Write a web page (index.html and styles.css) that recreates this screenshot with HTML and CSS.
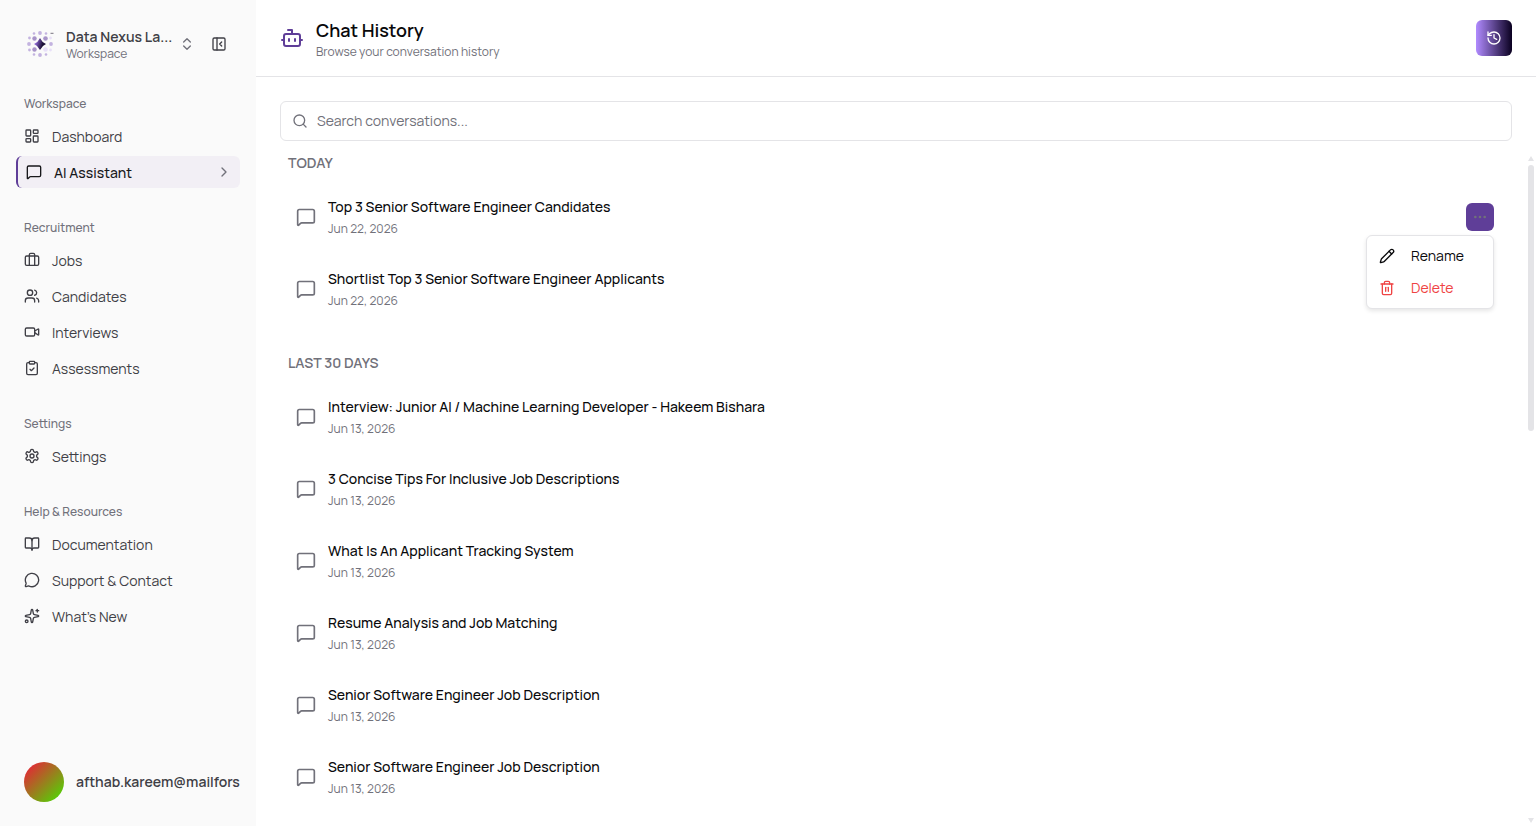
FILE: index.html
```
<!DOCTYPE html>
<html lang="en">
<head>
  <meta charset="UTF-8" />
  <meta name="viewport" content="width=device-width, initial-scale=1" />
  <title>Chat History</title>
  <link rel="stylesheet" href="styles.css">
</head>
<body>

  <!-- Shared icons -->
  <svg class="icon-defs" aria-hidden="true">
    <symbol id="i-message" viewBox="0 0 24 24"><path d="M21 15a2 2 0 0 1-2 2H7l-4 4V5a2 2 0 0 1 2-2h14a2 2 0 0 1 2 2z"/></symbol>
    <symbol id="i-message-wide" viewBox="0 0 24 24"><path d="M22 17a2 2 0 0 1-2 2H6.800a2 2 0 0 0-1.400.600l-2.200 2.200A.7.7 0 0 1 2 21.300V5a2 2 0 0 1 2-2h16a2 2 0 0 1 2 2z"/></symbol>
  </svg>

  <div class="app">

    <!-- Sidebar -->
    <aside class="sidebar">
      <div class="sidebar-top">
        <button class="workspace" type="button">
          <svg class="logo" viewBox="0 0 32 32" aria-hidden="true">
            <defs>
              <linearGradient id="star" x1="0" y1="0" x2="1" y2="0.3">
                <stop offset="0.1" stop-color="#a67cf5"/>
                <stop offset="0.8" stop-color="#1b1036"/>
              </linearGradient>
            </defs>
            <g fill="#c3b3e0">
              <circle cx="16" cy="5" r="1.9"/><circle cx="16" cy="27" r="1.9"/>
              <circle cx="5" cy="16" r="1.9"/><circle cx="27" cy="16" r="1.9"/>
              <circle cx="10" cy="5.5" r="1.3"/><circle cx="22" cy="5.5" r="1.3"/>
              <circle cx="5.5" cy="10" r="1.4"/><circle cx="5.5" cy="22" r="1.4"/>
              <circle cx="10" cy="26.5" r="1.3"/><circle cx="22" cy="26.5" r="1.3"/>
            </g>
            <g fill="#e8e0f8">
              <circle cx="26.5" cy="10" r="1.4"/><circle cx="26.5" cy="22" r="1.4"/>
              <circle cx="21.5" cy="21.5" r="2.3"/>
            </g>
            <g fill="#a894c9">
              <circle cx="10.5" cy="10.5" r="2.2"/><circle cx="21.5" cy="10.5" r="2.3"/>
              <circle cx="10.5" cy="21.5" r="2.2"/>
            </g>
            <path fill="#77727f" d="M26.5 4.8h3v1h-3z"/>
            <path fill="url(#star)" d="M16 10q1.8 4.2 6 6q-4.2 1.8-6 6q-1.8-4.2-6-6q4.2-1.8 6-6z"/>
          </svg>
          <span class="workspace-text">
            <span class="workspace-name">Data Nexus La...</span>
            <span class="workspace-sub">Workspace</span>
          </span>
          <svg class="icon icon-muted" viewBox="0 0 24 24"><path d="m7 15 5 5 5-5"/><path d="m7 9 5-5 5 5"/></svg>
        </button>
        <button class="collapse" type="button" aria-label="Collapse sidebar">
          <svg class="icon" viewBox="0 0 24 24"><rect width="18" height="18" x="3" y="3" rx="2"/><path d="M9 3v18"/><path d="m16 15-3-3 3-3"/></svg>
        </button>
      </div>

      <nav class="nav">
        <section class="nav-group">
          <h2>Workspace</h2>
          <a href="#">
            <svg class="icon" viewBox="0 0 24 24"><rect width="7" height="9" x="3" y="3" rx="1"/><rect width="7" height="5" x="14" y="3" rx="1"/><rect width="7" height="9" x="14" y="12" rx="1"/><rect width="7" height="5" x="3" y="16" rx="1"/></svg>
            <span>Dashboard</span>
          </a>
          <a href="#" class="active" aria-current="page">
            <svg class="icon"><use href="#i-message-wide"/></svg>
            <span>AI Assistant</span>
            <svg class="icon icon-muted chevron" viewBox="0 0 24 24"><path d="m9 18 6-6-6-6"/></svg>
          </a>
        </section>

        <section class="nav-group">
          <h2>Recruitment</h2>
          <a href="#">
            <svg class="icon" viewBox="0 0 24 24"><path d="M16 20V4a2 2 0 0 0-2-2h-4a2 2 0 0 0-2 2v16"/><rect width="20" height="14" x="2" y="6" rx="2"/></svg>
            <span>Jobs</span>
          </a>
          <a href="#">
            <svg class="icon" viewBox="0 0 24 24"><path d="M16 21v-2a4 4 0 0 0-4-4H6a4 4 0 0 0-4 4v2"/><circle cx="9" cy="7" r="4"/><path d="M22 21v-2a4 4 0 0 0-3-3.87"/><path d="M16 3.13a4 4 0 0 1 0 7.75"/></svg>
            <span>Candidates</span>
          </a>
          <a href="#">
            <svg class="icon" viewBox="0 0 24 24"><path d="m16 13 5.223 3.482a.5.5 0 0 0 .777-.416V7.87a.5.5 0 0 0-.752-.432L16 10.5"/><rect x="2" y="6" width="14" height="12" rx="2"/></svg>
            <span>Interviews</span>
          </a>
          <a href="#">
            <svg class="icon" viewBox="0 0 24 24"><rect width="8" height="4" x="8" y="2" rx="1"/><path d="M16 4h2a2 2 0 0 1 2 2v14a2 2 0 0 1-2 2H6a2 2 0 0 1-2-2V6a2 2 0 0 1 2-2h2"/><path d="m9 14 2 2 4-4"/></svg>
            <span>Assessments</span>
          </a>
        </section>

        <section class="nav-group">
          <h2>Settings</h2>
          <a href="#">
            <svg class="icon" viewBox="0 0 24 24"><path d="M12.22 2h-.44a2 2 0 0 0-2 2v.18a2 2 0 0 1-1 1.73l-.43.25a2 2 0 0 1-2 0l-.15-.08a2 2 0 0 0-2.73.73l-.22.38a2 2 0 0 0 .73 2.73l.15.1a2 2 0 0 1 1 1.72v.51a2 2 0 0 1-1 1.74l-.15.09a2 2 0 0 0-.73 2.73l.22.38a2 2 0 0 0 2.73.73l.15-.08a2 2 0 0 1 2 0l.43.25a2 2 0 0 1 1 1.73V20a2 2 0 0 0 2 2h.44a2 2 0 0 0 2-2v-.18a2 2 0 0 1 1-1.73l.43-.25a2 2 0 0 1 2 0l.15.08a2 2 0 0 0 2.73-.73l.22-.39a2 2 0 0 0-.73-2.73l-.15-.08a2 2 0 0 1-1-1.74v-.5a2 2 0 0 1 1-1.74l.15-.09a2 2 0 0 0 .73-2.73l-.22-.38a2 2 0 0 0-2.73-.73l-.15.08a2 2 0 0 1-2 0l-.43-.25a2 2 0 0 1-1-1.73V4a2 2 0 0 0-2-2z"/><circle cx="12" cy="12" r="3"/></svg>
            <span>Settings</span>
          </a>
        </section>

        <section class="nav-group">
          <h2>Help &amp; Resources</h2>
          <a href="#">
            <svg class="icon" viewBox="0 0 24 24"><path d="M12 7v14"/><path d="M3 18a1 1 0 0 1-1-1V4a1 1 0 0 1 1-1h5a4 4 0 0 1 4 4 4 4 0 0 1 4-4h5a1 1 0 0 1 1 1v13a1 1 0 0 1-1 1h-6a3 3 0 0 0-3 3 3 3 0 0 0-3-3z"/></svg>
            <span>Documentation</span>
          </a>
          <a href="#">
            <svg class="icon" viewBox="0 0 24 24"><path d="M2.992 16.342a2 2 0 0 1 .094 1.167l-1.065 3.29a1 1 0 0 0 1.236 1.168l3.413-.998a2 2 0 0 1 1.099.092 10 10 0 1 0-4.777-4.719"/></svg>
            <span>Support &amp; Contact</span>
          </a>
          <a href="#">
            <svg class="icon" viewBox="0 0 24 24"><path d="M11.017 2.814a1 1 0 0 1 1.966 0l1.051 5.558a2 2 0 0 0 1.594 1.594l5.558 1.051a1 1 0 0 1 0 1.966l-5.558 1.051a2 2 0 0 0-1.594 1.594l-1.051 5.558a1 1 0 0 1-1.966 0l-1.051-5.558a2 2 0 0 0-1.594-1.594l-5.558-1.051a1 1 0 0 1 0-1.966l5.558-1.051a2 2 0 0 0 1.594-1.594z"/><path d="M20 2v4"/><path d="M22 4h-4"/><circle cx="4" cy="20" r="2"/></svg>
            <span>What’s New</span>
          </a>
        </section>
      </nav>

      <div class="user">
        <span class="avatar"></span>
        <span class="user-email">afthab.kareem@mailfors</span>
      </div>
    </aside>

    <!-- Main content -->
    <main class="main">
      <header class="header">
        <svg class="icon bot" viewBox="0 0 24 24"><path d="M12 8V4H8"/><rect width="16" height="12" x="4" y="8" rx="2"/><path d="M2 14h2"/><path d="M20 14h2"/><path d="M15 13v2"/><path d="M9 13v2"/></svg>
        <div class="header-text">
          <h1>Chat History</h1>
          <p>Browse your conversation history</p>
        </div>
        <button class="history-btn" type="button" aria-label="History">
          <svg class="icon" viewBox="0 0 24 24"><path d="M3 12a9 9 0 1 0 9-9 9.75 9.75 0 0 0-6.74 2.74L3 8"/><path d="M3 3v5h5"/><path d="M12 7v5l4 2"/></svg>
        </button>
      </header>

      <label class="search">
        <svg class="icon" viewBox="0 0 24 24"><circle cx="11" cy="11" r="8"/><path d="m21 21-4.3-4.3"/></svg>
        <input type="text" placeholder="Search conversations..." aria-label="Search conversations">
      </label>

      <div class="history">
        <div class="history-list">
          <section class="day-group">
            <h2>TODAY</h2>
            <ul>
              <li class="chat">
                <svg class="icon"><use href="#i-message-wide"/></svg>
                <div><h3>Top 3 Senior Software Engineer Candidates</h3><p>Jun 22, 2026</p></div>
                <div class="more">
                  <button class="more-btn" type="button" aria-label="More options" aria-expanded="true">
                    <svg class="icon" viewBox="0 0 24 24"><circle cx="12" cy="12" r="1"/><circle cx="19" cy="12" r="1"/><circle cx="5" cy="12" r="1"/></svg>
                  </button>
                  <div class="menu">
                    <button type="button">
                      <svg class="icon" viewBox="0 0 24 24"><path d="M21.174 6.812a1 1 0 0 0-3.986-3.987L3.842 16.174a2 2 0 0 0-.5.83l-1.321 4.352a.5.5 0 0 0 .623.622l4.353-1.32a2 2 0 0 0 .83-.497z"/><path d="m15 5 4 4"/></svg>
                      Rename
                    </button>
                    <button type="button" class="danger">
                      <svg class="icon" viewBox="0 0 24 24"><path d="M3 6h18"/><path d="M19 6v14c0 1-1 2-2 2H7c-1 0-2-1-2-2V6"/><path d="M8 6V4c0-1 1-2 2-2h4c1 0 2 1 2 2v2"/><path d="M10 11v6"/><path d="M14 11v6"/></svg>
                      Delete
                    </button>
                  </div>
                </div>
              </li>
              <li class="chat">
                <svg class="icon"><use href="#i-message-wide"/></svg>
                <div><h3>Shortlist Top 3 Senior Software Engineer Applicants</h3><p>Jun 22, 2026</p></div>
              </li>
            </ul>
          </section>

          <section class="day-group">
            <h2>LAST 30 DAYS</h2>
            <ul>
              <li class="chat">
                <svg class="icon"><use href="#i-message-wide"/></svg>
                <div><h3>Interview: Junior AI / Machine Learning Developer - Hakeem Bishara</h3><p>Jun 13, 2026</p></div>
              </li>
              <li class="chat">
                <svg class="icon"><use href="#i-message-wide"/></svg>
                <div><h3>3 Concise Tips For Inclusive Job Descriptions</h3><p>Jun 13, 2026</p></div>
              </li>
              <li class="chat">
                <svg class="icon"><use href="#i-message-wide"/></svg>
                <div><h3>What Is An Applicant Tracking System</h3><p>Jun 13, 2026</p></div>
              </li>
              <li class="chat">
                <svg class="icon"><use href="#i-message-wide"/></svg>
                <div><h3>Resume Analysis and Job Matching</h3><p>Jun 13, 2026</p></div>
              </li>
              <li class="chat">
                <svg class="icon"><use href="#i-message-wide"/></svg>
                <div><h3>Senior Software Engineer Job Description</h3><p>Jun 13, 2026</p></div>
              </li>
              <li class="chat">
                <svg class="icon"><use href="#i-message-wide"/></svg>
                <div><h3>Senior Software Engineer Job Description</h3><p>Jun 13, 2026</p></div>
              </li>
            </ul>
          </section>
        </div>

        <div class="scrollbar" aria-hidden="true">
          <svg viewBox="0 0 8 6"><path d="M4 0 7 5H1z"/></svg>
          <div class="track"><div class="thumb"></div></div>
          <svg viewBox="0 0 8 6"><path d="M4 6 7 1H1z"/></svg>
        </div>
      </div>
    </main>

  </div>

</body>
</html>
```

FILE: styles.css
```
* {
  box-sizing: border-box;
}

body {
  margin: 0;
  font-family: Manrope, Inter, "Open Sans", sans-serif;
  font-size: 14px;
  line-height: 20px;
  color: #09090b;
  background: #fff;
}

h1, h2, h3, p, ul {
  margin: 0;
  padding: 0;
}

ul {
  list-style: none;
}

button {
  border: 0;
  padding: 0;
  font: inherit;
  color: inherit;
  background: none;
  cursor: pointer;
}

.icon-defs {
  position: absolute;
  width: 0;
  height: 0;
}

.icon {
  width: 16px;
  height: 16px;
  flex-shrink: 0;
  fill: none;
  stroke: currentColor;
  stroke-width: 2;
  stroke-linecap: round;
  stroke-linejoin: round;
}

.icon-muted {
  color: #71717a;
}

.app {
  display: flex;
  height: 100vh;
}

/* Sidebar */
.sidebar {
  display: flex;
  flex-direction: column;
  flex-shrink: 0;
  width: 256px;
  padding: 24px 16px;
  background: #fafafa;
  color: #3f3f46;
}

.sidebar-top {
  display: flex;
  align-items: center;
  gap: 16px;
  height: 40px;
  padding: 0 13px 0 8px;
}

.workspace {
  display: flex;
  align-items: center;
  flex: 1;
  min-width: 0;
  gap: 6px;
  text-align: left;
}

.logo {
  width: 32px;
  height: 32px;
  flex-shrink: 0;
  margin-right: 4px;
}

.workspace-text {
  display: flex;
  flex-direction: column;
  flex: 1;
  min-width: 0;
  padding-top: 2px;
}

.workspace-name {
  overflow: hidden;
  white-space: nowrap;
  text-overflow: ellipsis;
  font-weight: 600;
  line-height: 18px;
}

.workspace-sub {
  font-size: 12px;
  line-height: 16px;
  color: #71717a;
}

.collapse {
  display: flex;
}

.nav {
  display: flex;
  flex-direction: column;
  flex: 1;
  gap: 24px;
  padding-top: 24px;
}

.nav-group {
  display: flex;
  flex-direction: column;
  gap: 4px;
}

.nav-group h2 {
  padding: 6px 8px;
  margin-bottom: -4px;
  font-size: 12px;
  font-weight: 500;
  color: #71717a;
}

.nav-group a {
  display: flex;
  align-items: center;
  gap: 12px;
  height: 32px;
  padding: 0 8px;
  border-radius: 6px;
  color: inherit;
  text-decoration: none;
}

.nav-group a span {
  padding-top: 2px;
}

.nav-group a.active {
  border-left: 2px solid #5f3e98;
  background: #f2eff5;
  color: #18181b;
  font-weight: 500;
}

.chevron {
  margin-left: auto;
}

.user {
  display: flex;
  align-items: center;
  gap: 12px;
  padding-left: 8px;
}

.avatar {
  width: 40px;
  height: 40px;
  flex-shrink: 0;
  border-radius: 50%;
  background: linear-gradient(135deg, #f5133c, #42e600);
}

.user-email {
  white-space: nowrap;
  font-weight: 600;
}

/* Main content */
.main {
  display: flex;
  flex-direction: column;
  flex: 1;
  min-width: 0;
}

.header {
  display: flex;
  align-items: center;
  gap: 12px;
  padding: 16px 24px;
  border-bottom: 1px solid #e4e4e7;
}

.header-text {
  flex: 1;
}

.header h1 {
  font-size: 18px;
  font-weight: 600;
  line-height: 28px;
}

.header p {
  font-size: 12px;
  line-height: 16px;
  color: #71717a;
}

.bot {
  width: 24px;
  height: 24px;
  color: #5f3e98;
}

.history-btn {
  display: flex;
  align-items: center;
  justify-content: center;
  width: 36px;
  height: 36px;
  border-radius: 6px;
  color: #fff;
  background: linear-gradient(90deg, #b18bff, #0a0020);
}

/* Search box */
.search {
  display: flex;
  align-items: center;
  gap: 9px;
  height: 40px;
  margin: 24px 24px 12px;
  padding: 0 11px;
  border: 1px solid #e4e4e7;
  border-radius: 6px;
  color: #71717a;
}

.search input {
  flex: 1;
  border: 0;
  outline: 0;
  padding: 0;
  font: inherit;
  background: none;
}

.search input::placeholder {
  color: #71717a;
}

/* Conversation list */
.history {
  display: flex;
  flex: 1;
  min-height: 0;
}

.history-list {
  flex: 1;
  min-width: 0;
  overflow: hidden;
  padding: 0 24px 0 32px;
}

.day-group {
  margin-bottom: 32px;
}

.day-group h2 {
  margin-bottom: 12px;
  font-size: 14px;
  font-weight: 600;
  line-height: 20px;
  color: #71717a;
}

.day-group ul {
  display: flex;
  flex-direction: column;
  gap: 8px;
}

.chat {
  display: flex;
  align-items: center;
  gap: 12px;
  height: 64px;
  padding: 0 8px;
}

.chat > .icon {
  width: 20px;
  height: 20px;
  color: #71717a;
}

.chat h3 {
  font-size: 14px;
  font-weight: 500;
}

.chat p {
  margin-top: 4px;
  font-size: 12px;
  line-height: 16px;
  color: #71717a;
}

/* Row menu */
.more {
  position: relative;
  margin-left: auto;
}

.more-btn {
  display: flex;
  align-items: center;
  justify-content: center;
  width: 28px;
  height: 28px;
  border-radius: 6px;
  color: #71717a;
  background: #5f3e98;
}

.menu {
  position: absolute;
  top: 100%;
  right: 0;
  width: 128px;
  margin-top: 4px;
  padding: 4px;
  border: 1px solid #e4e4e7;
  border-radius: 6px;
  background: #fff;
  box-shadow: 0 2px 4px rgba(0, 0, 0, 0.1);
}

.menu button {
  display: flex;
  align-items: center;
  gap: 16px;
  width: 100%;
  height: 32px;
  padding: 0 8px;
}

.menu .danger {
  color: #ef4444;
}

/* Scrollbar */
.scrollbar {
  display: flex;
  flex-direction: column;
  align-items: center;
  width: 10px;
  padding: 2px 0;
}

.scrollbar svg {
  width: 8px;
  height: 8px;
  fill: #e4e4e7;
}

.track {
  flex: 1;
  width: 6px;
  padding: 2px 0;
}

.thumb {
  height: 41%;
  border-radius: 3px;
  background: #e4e4e7;
}
```
